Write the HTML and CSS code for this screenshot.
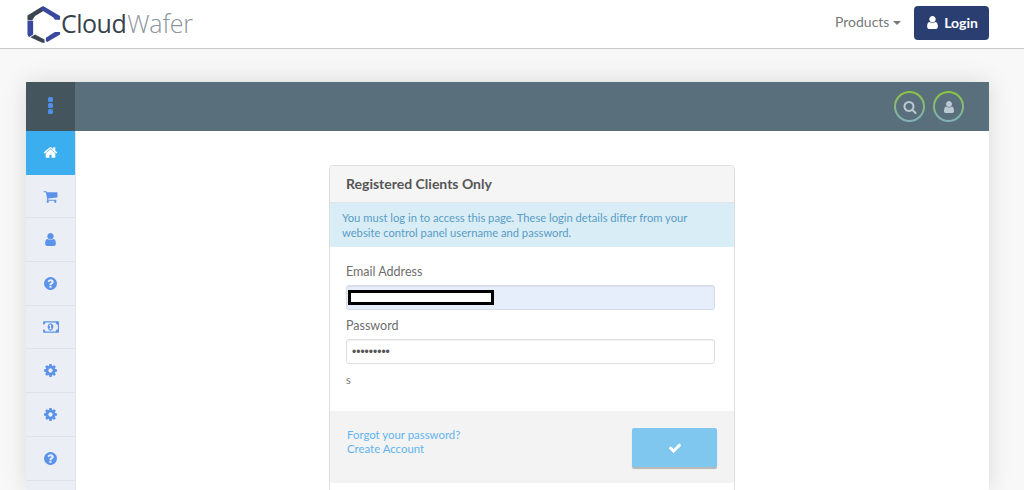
FILE: index.html
```html
<!DOCTYPE html>
<html lang="en">
<head>
<meta charset="utf-8">
<title>CloudWafer - Login</title>
<link rel="stylesheet" href="styles.css">
</head>
<body>
<svg class="defs" width="0" height="0" aria-hidden="true">
  <symbol id="i-user" viewBox="0 0 1792 1792"><path d="M1536 1399q0 109-62.500 187t-150.500 78h-854q-88 0-150.500-78t-62.500-187q0-85 8.500-160.500t31.500-152 58.500-131 94-89 134.500-34.500q131 128 313 128t313-128q76 0 134.500 34.500t94 89 58.500 131 31.500 152 8.500 160.500zm-256-887q0 159-112.500 271.500t-271.500 112.500-271.500-112.500-112.500-271.500 112.500-271.500 271.500-112.500 271.500 112.500 112.500 271.500z"/></symbol>
  <symbol id="i-home" viewBox="0 0 1792 1792"><path d="M1472 992v480q0 26-19 45t-45 19h-384v-384h-256v384h-384q-26 0-45-19t-19-45v-480q0-1 .5-3t.5-3l575-474 575 474q1 2 1 6zm223-69l-62 74q-8 9-21 11h-3q-13 0-21-7l-692-577-692 577q-12 8-24 7-13-2-21-11l-62-74q-8-10-7-23.500t11-21.500l719-599q32-26 76-26t76 26l244 204v-195q0-14 9-23t23-9h192q14 0 23 9t9 23v408l219 182q10 8 11 21.500t-7 23.500z"/></symbol>
  <symbol id="i-cart" viewBox="0 0 1792 1792"><path d="M704 1536q0 52-38 90t-90 38-90-38-38-90 38-90 90-38 90 38 38 90zm896 0q0 52-38 90t-90 38-90-38-38-90 38-90 90-38 90 38 38 90zm128-1088v512q0 24-16.500 42.500t-40.500 21.500l-1044 122q13 60 13 70 0 16-24 64h920q26 0 45 19t19 45-19 45-45 19h-1024q-26 0-45-19t-19-45q0-11 8-31.500t16-36 21.500-40 15.500-29.500l-177-823h-204q-26 0-45-19t-19-45 19-45 45-19h256q16 0 28.500 6.500t19.500 15.500 13 24.500 8 26 5.500 29.500 4.500 26h1201q26 0 45 19t19 45z"/></symbol>
  <symbol id="i-help" viewBox="0 0 1792 1792"><path d="M1024 1376v-192q0-14-9-23t-23-9h-192q-14 0-23 9t-9 23v192q0 14 9 23t23 9h192q14 0 23-9t9-23zm256-672q0-88-55.500-163t-138.500-116-170-41q-243 0-371 213-15 24 8 42l132 100q7 6 19 6 16 0 25-12 53-68 86-92 34-24 86-24 48 0 85.500 26t37.500 59q0 38-20 61t-68 45q-63 28-115.500 86.500t-52.500 125.500v36q0 14 9 23t23 9h192q14 0 23-9t9-23q0-19 21.500-49.500t54.500-49.500q32-18 49-28.500t46-35 44.500-48 28-60.500 12.500-81zm384 192q0 209-103 385.500t-279.500 279.500-385.500 103-385.500-103-279.500-279.500-103-385.500 103-385.500 279.500-279.500 385.500-103 385.500 103 279.500 279.500 103 385.500z"/></symbol>
  <symbol id="i-money" viewBox="0 0 1920 1792"><path d="M768 1152h384v-96h-128v-448h-114l-148 137 77 80q42-37 55-57h2v288h-128v96zm512-256q0 70-21 142t-59.500 134-101.500 101-138 39-138-39-101.500-101-59.500-134-21-142 21-142 59.500-134 101.500-101 138-39 138 39 101.500 101 59.500 134 21 142zm512 256v-512q-106 0-181-75t-75-181h-1152q0 106-75 181t-181 75v512q106 0 181 75t75 181h1152q0-106 75-181t181-75zm128-832v1152q0 26-19 45t-45 19h-1664q-26 0-45-19t-19-45v-1152q0-26 19-45t45-19h1664q26 0 45 19t19 45z"/></symbol>
  <symbol id="i-cog" viewBox="0 0 1792 1792"><path d="M1152 896q0-106-75-181t-181-75-181 75-75 181 75 181 181 75 181-75 75-181zm512-109v222q0 12-8 23t-20 13l-185 28q-19 54-39 91 35 50 107 138 10 12 10 25t-9 23q-27 37-99 108t-94 71q-12 0-26-9l-138-108q-44 23-91 38-16 136-29 186-7 28-36 28h-222q-14 0-24.500-8.500t-11.500-21.500l-28-184q-49-16-90-37l-141 107q-10 9-25 9-14 0-25-11-126-114-165-168-7-10-7-23 0-12 8-23 15-21 51-66.500t54-70.500q-27-50-41-99l-183-27q-13-2-21-12.500t-8-23.500v-222q0-12 8-23t19-13l186-28q14-46 39-92-40-57-107-138-10-12-10-24 0-10 9-23 26-36 98.500-107.500t94.500-71.500q13 0 26 10l138 107q44-23 91-38 16-136 29-186 7-28 36-28h222q14 0 24.500 8.500t11.500 21.500l28 184q49 16 90 37l142-107q9-9 24-9 13 0 25 10 129 119 165 170 7 8 7 22 0 12-8 23-15 21-51 66.500t-54 70.500q26 50 41 98l183 28q13 2 21 12.500t8 23.500z"/></symbol>
  <symbol id="i-search" viewBox="0 0 1792 1792"><path d="M1216 832q0-185-131.500-316.500t-316.500-131.500-316.500 131.500-131.500 316.500 131.500 316.500 316.500 131.500 316.500-131.500 131.500-316.500zm512 832q0 52-38 90t-90 38q-54 0-90-38l-343-342q-179 124-399 124-143 0-273.500-55.500t-225-150-150-225-55.500-273.500 55.500-273.500 150-225 225-150 273.500-55.500 273.500 55.500 225 150 150 225 55.500 273.500q0 220-124 399l343 343q37 37 37 90z"/></symbol>
  <symbol id="i-check" viewBox="0 0 1792 1792"><path d="M1671 566q0 40-28 68l-724 724-136 136q-28 28-68 28t-68-28l-136-136-362-362q-28-28-28-68t28-68l136-136q28-28 68-28t68 28l294 295 656-657q28-28 68-28t68 28l136 136q28 28 28 68z"/></symbol>
</svg>

<header class="navbar">
  <a class="brand" href="#">
    <svg class="brand-mark" viewBox="0 0 36 40" aria-hidden="true">
      <path class="mark-dark" d="M0.500 16 L0.500 11 L16 1.500 L20.500 4.500 L8.500 11.500 L5.500 16 Z"/>
      <path class="mark-blue" d="M17 1 L35 11.500 L35 15.500 L29.500 15.500 L28 13 L14 4.500 Z"/>
      <path class="mark-blue" d="M0.500 16.500 L6.500 16.500 L6.500 31 L2 34 L0.500 31 Z"/>
      <path class="mark-dark" d="M3.500 34 L8.500 31 L18.500 36.500 L18.500 40 L15.500 39.500 Z"/>
      <path class="mark-blue" d="M20 34.500 L29.500 28.500 L35 28.500 L35 31 L21.500 39 L20 38 Z"/>
    </svg>
    <span class="brand-name">Cloud<span class="brand-light">Wafer</span></span>
  </a>
  <nav class="nav-actions">
    <a class="nav-link" href="#">Products <span class="caret"></span></a>
    <a class="btn-login" href="#"><svg class="ic ic-login"><use href="#i-user"/></svg>Login</a>
  </nav>
</header>

<main class="page">
  <section class="card">
    <div class="topbar">
      <div class="menu-toggle"><span class="dot"></span><span class="dot"></span><span class="dot"></span></div>
      <div class="top-actions">
        <a class="ring" href="#"><svg class="ic ic-ring"><use href="#i-search"/></svg></a>
        <a class="ring" href="#"><svg class="ic ic-ring"><use href="#i-user"/></svg></a>
      </div>
    </div>
    <div class="card-body">
      <ul class="side">
        <li class="side-item active"><svg class="ic ic-side"><use href="#i-home"/></svg></li>
        <li class="side-item"><svg class="ic ic-side"><use href="#i-cart"/></svg></li>
        <li class="side-item"><svg class="ic ic-side"><use href="#i-user"/></svg></li>
        <li class="side-item"><svg class="ic ic-side"><use href="#i-help"/></svg></li>
        <li class="side-item"><svg class="ic ic-money"><use href="#i-money"/></svg></li>
        <li class="side-item"><svg class="ic ic-side"><use href="#i-cog"/></svg></li>
        <li class="side-item"><svg class="ic ic-side"><use href="#i-cog"/></svg></li>
        <li class="side-item"><svg class="ic ic-side"><use href="#i-help"/></svg></li>
        <li class="side-item"></li>
      </ul>
      <div class="content">
        <div class="panel">
          <h1 class="panel-head">Registered Clients Only</h1>
          <p class="alert">You must log in to access this page. These login details differ from your website control panel username and password.</p>
          <form class="panel-body">
            <label class="field-label" for="email">Email Address</label>
            <div class="input-wrap">
              <input class="input input-filled" id="email" type="text">
              <span class="redact"></span>
            </div>
            <label class="field-label label-pw" for="password">Password</label>
            <input class="input" id="password" type="password" value="123456789">
            <p class="note">s</p>
          </form>
          <div class="panel-foot">
            <div class="foot-links">
              <a href="#">Forgot your password?</a>
              <a href="#">Create Account</a>
            </div>
            <button class="btn-submit" type="button"><svg class="ic ic-check"><use href="#i-check"/></svg></button>
          </div>
        </div>
      </div>
    </div>
  </section>
</main>
</body>
</html>
```

FILE: styles.css
```css
* { box-sizing: border-box; }
html, body { height: 490px; overflow: hidden; }
body {
  margin: 0;
  background: #f8f8f8;
  font-family: "Lato", "Liberation Sans", sans-serif;
  color: #555;
}
a { text-decoration: none; }
.defs { display: block; height: 0; }
.ic { display: block; fill: currentColor; }

.navbar {
  height: 49px;
  background: #fff;
  border-bottom: 1px solid #c9c9c9;
  display: flex;
  align-items: flex-start;
  justify-content: space-between;
  padding: 0 35px 0 27px;
}
.brand { display: flex; align-items: center; height: 48px; }
.brand-mark { width: 34px; height: 38px; margin-top: -1px; }
.mark-dark { fill: #3b4650; }
.mark-blue { fill: #3a479f; }
.brand-name {
  font-family: "Open Sans", "Liberation Sans", sans-serif;
  font-size: 25px;
  letter-spacing: -0.5px;
  line-height: 48px;
  margin-top: -2px;
  color: #36434d;
}
.brand-light { font-weight: 300; color: #8b959c; margin-left: 1px; letter-spacing: -0.2px; }
.nav-actions { display: flex; align-items: flex-start; padding-top: 6px; gap: 13px; }
.nav-link { font-size: 14px; line-height: 32px; color: #777; margin-left: 1px; }
.caret {
  display: inline-block;
  vertical-align: middle;
  margin-left: 0;
  border-top: 4px solid #777;
  border-left: 4px solid transparent;
  border-right: 4px solid transparent;
}
.btn-login {
  width: 75px;
  height: 34px;
  padding-bottom: 2px;
  background: #2b3e72;
  border-radius: 4px;
  color: #fff;
  font-size: 14px;
  font-weight: 700;
  display: flex;
  align-items: center;
  justify-content: center;
  gap: 4px;
}
.ic-login { width: 15px; height: 15px; }

.page { padding: 33px 35px 0 26px; }
.card {
  background: #fff;
  box-shadow: 0 0 22px rgba(0, 0, 0, 0.13);
  height: 408px;
}
.topbar {
  height: 49px;
  background: #5a6f7c;
  display: flex;
  align-items: center;
  justify-content: space-between;
}
.menu-toggle {
  width: 49px;
  height: 49px;
  padding-bottom: 2px;
  background: #44555e;
  display: flex;
  flex-direction: column;
  align-items: center;
  justify-content: center;
  gap: 1px;
}
.dot { width: 5px; height: 5px; border-radius: 1.5px; background: #4f8fe8; }
.top-actions { display: flex; gap: 8px; padding-right: 25px; }
.ring {
  width: 31px;
  height: 31px;
  border-radius: 50%;
  border: 2px solid transparent;
  background:
    linear-gradient(#5a6f7c, #5a6f7c) padding-box,
    linear-gradient(#8cc63f, #7fb0bd) border-box;
  color: #b9c8d1;
  display: flex;
  align-items: center;
  justify-content: center;
}
.ic-ring { width: 14px; height: 14px; }

.card-body { display: flex; height: 359px; overflow: hidden; }
.side {
  list-style: none;
  margin: 0;
  padding: 0;
  width: 50px;
  flex: none;
  background: #ebeef4;
  border-right: 1px solid #e2e5ea;
}
.side-item {
  height: 43.7px;
  border-bottom: 1px solid #dfe2e7;
  color: #5b93ea;
  display: flex;
  align-items: center;
  justify-content: center;
}
.side-item.active { background: #3aaeee; color: #fff; border-bottom: 0; }
.ic-side { width: 15px; height: 15px; }
.ic-money { width: 17px; height: 16px; }

.content { flex: 1; padding: 34px 1px 0 0; display: flex; justify-content: center; }
.panel {
  width: 406px;
  height: 400px;
  border: 1px solid #ddd;
  border-radius: 4px;
  background: #fff;
}
.panel-head {
  margin: 0;
  height: 37px;
  padding: 0 16px;
  background: #f5f5f5;
  border-bottom: 1px solid #e4e4e4;
  border-radius: 3px 3px 0 0;
  font-size: 14px;
  font-weight: 700;
  line-height: 35px;
  color: #555;
}
.alert {
  margin: 0;
  height: 44px;
  padding: 7px 12px;
  background: #d9edf7;
  color: #5a9cc4;
  font-size: 11.2px;
  line-height: 15px;
}
.panel-body { display: block; height: 164px; padding: 16px 20px 0 16px; }
.field-label { display: block; font-size: 12.500px; line-height: 17px; color: #6e6e6e; }
.label-pw { margin-top: 7px; }
.input-wrap { position: relative; margin-top: 5px; }
.input {
  display: block;
  width: 369px;
  height: 25px;
  padding: 0 5px;
  border: 1px solid #ddd;
  border-radius: 3px;
  background: #fff;
  font-size: 12px;
  color: #555;
  box-shadow: inset 0 1px 1px rgba(0, 0, 0, 0.05);
}
.label-pw + .input { margin-top: 5px; }
.input-filled { background: #e6eefb; border-color: #d6dce6; }
.redact {
  position: absolute;
  left: 2px;
  top: 5px;
  width: 146px;
  height: 15px;
  background: #fff;
  border: 3px solid #000;
}
.note { margin: 9px 0 0; font-size: 11px; line-height: 13px; color: #777; }
.panel-foot {
  height: 72px;
  background: #f3f3f3;
  display: flex;
  justify-content: space-between;
  align-items: flex-start;
  padding: 17px 17px 0 17px;
  border-radius: 0 0 3px 3px;
}
.foot-links { display: flex; flex-direction: column; font-size: 11.4px; line-height: 14px; }
.foot-links a { color: #62b4f0; }
.btn-submit {
  width: 85px;
  height: 39px;
  border: 0;
  padding: 0;
  border-radius: 2px;
  background: #7fc7ef;
  box-shadow: 0 2px 1px rgba(0, 0, 0, 0.25);
  color: #fff;
  display: flex;
  align-items: center;
  justify-content: center;
}
.ic-check { width: 14px; height: 14px; }
```
